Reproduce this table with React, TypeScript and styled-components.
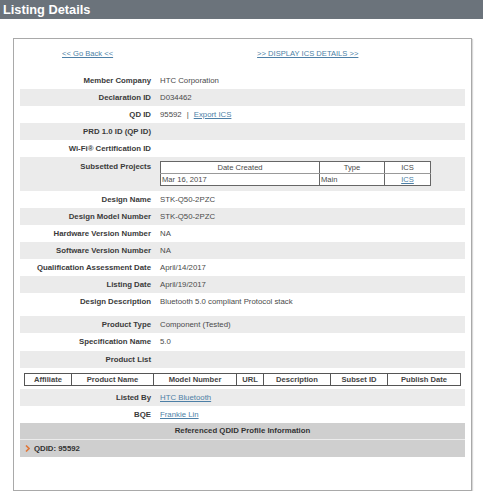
import React from "react";
import styled, { createGlobalStyle } from "styled-components";

const Global = createGlobalStyle`
  html, body { margin: 0; padding: 0; background: #fff; }
  body { font-family: "Liberation Sans", Arial, sans-serif; }
`;

const Header = styled.div`
  height: 19px;
  background: #6b737b;
  color: #fff;
  font-weight: bold;
  font-size: 12.8px;
  line-height: 20px;
  padding-left: 3px;
`;

const Panel = styled.div`
  margin: 19px 0 0 13px;
  height: 451px;
  border: 1px solid #a9a9a9;
  box-shadow: 1px 1px 1px #d8d8d8;
  padding: 0 6px;
  box-sizing: content-box;
  width: 445px;
`;

const LinkRow = styled.div`
  display: flex;
  padding: 10px 0 0 42px;
  height: 23px;
  font-size: 7.6px;
  line-height: 9px;
`;

const Link = styled.a<{ $gap?: number }>`
  color: #4d7fa6;
  text-decoration: underline;
  margin-left: ${(p) => p.$gap ?? 0}px;
  cursor: pointer;
`;

const Rows = styled.div`
  display: flex;
  flex-direction: column;
`;

const Row = styled.div<{ $alt?: boolean; $h?: number; $top?: boolean }>`
  display: grid;
  grid-template-columns: 135px 1fr;
  min-height: ${(p) => p.$h ?? 17}px;
  background: ${(p) => (p.$alt ? "#ebebeb" : "#fff")};
  align-items: ${(p) => (p.$top ? "start" : "center")};
  font-size: 7.8px;
  line-height: 10px;
`;

const Label = styled.div<{ $pt?: number }>`
  text-align: right;
  padding-right: 4px;
  font-weight: bold;
  color: #3a3a3a;
  padding-top: ${(p) => p.$pt ?? 0}px;
`;

const Value = styled.div<{ $pt?: number }>`
  padding-left: 5px;
  color: #4a4a4a;
  padding-top: ${(p) => p.$pt ?? 0}px;
`;

const Sep = styled.span`
  margin: 0 5px;
`;

const SubTable = styled.table`
  border-collapse: collapse;
  width: 271px;
  margin: 4px 0 5px 0;
  font-size: 7.6px;
  background: #fff;
  td, th {
    border: 1px solid #666;
    height: 11px;
    padding: 0 1px;
    line-height: 10px;
    color: #4a4a4a;
    font-weight: normal;
  }
  th { border-bottom-color: #999; }
  td { border-top: none; }
`;

const Cell = styled.td<{ $center?: boolean }>`
  text-align: ${(p) => (p.$center ? "center" : "left")};
`;

const ProductWrap = styled.div`
  background: #fff;
  padding: 5px 4px 3px 4px;
`;

const ProductTable = styled.table`
  border-collapse: collapse;
  width: 437px;
  font-size: 7.6px;
  th {
    border: 1px solid #555;
    height: 11px;
    padding: 0;
    font-weight: bold;
    color: #444;
    text-align: center;
    line-height: 10px;
  }
`;

const RefHeader = styled.div`
  background: #cfcfcf;
  height: 16px;
  line-height: 16px;
  text-align: center;
  font-weight: bold;
  font-size: 7.8px;
  color: #333;
  border-bottom: 1px solid #ececec;
`;

const QdidRow = styled.div`
  background: #cfcfcf;
  height: 17px;
  display: flex;
  align-items: center;
  gap: 4px;
  padding-left: 5px;
  font-weight: bold;
  font-size: 7.8px;
  color: #333;
`;

export default function App() {
  return (
    <>
      <Global />
      <Header>Listing Details</Header>
      <Panel>
        <LinkRow>
          <Link>&lt;&lt; Go Back &lt;&lt;</Link>
          <Link $gap={144}>&gt;&gt; DISPLAY ICS DETAILS &gt;&gt;</Link>
        </LinkRow>
        <Rows>
          <Row>
            <Label>Member Company</Label>
            <Value>HTC Corporation</Value>
          </Row>
          <Row $alt>
            <Label>Declaration ID</Label>
            <Value>D034462</Value>
          </Row>
          <Row>
            <Label>QD ID</Label>
            <Value>
              95592<Sep>|</Sep>
              <Link>Export ICS</Link>
            </Value>
          </Row>
          <Row $alt>
            <Label>PRD 1.0 ID (QP ID)</Label>
            <Value />
          </Row>
          <Row>
            <Label>Wi-Fi® Certification ID</Label>
            <Value />
          </Row>
          <Row $alt $top $h={33}>
            <Label $pt={5}>Subsetted Projects</Label>
            <Value>
              <SubTable>
                <thead>
                  <tr>
                    <th style={{ width: 156 }}>Date Created</th>
                    <th style={{ width: 62 }}>Type</th>
                    <th>ICS</th>
                  </tr>
                </thead>
                <tbody>
                  <tr>
                    <Cell>Mar 16, 2017</Cell>
                    <Cell>Main</Cell>
                    <Cell $center>
                      <Link>ICS</Link>
                    </Cell>
                  </tr>
                </tbody>
              </SubTable>
            </Value>
          </Row>
          <Row>
            <Label>Design Name</Label>
            <Value>STK-Q50-2PZC</Value>
          </Row>
          <Row $alt>
            <Label>Design Model Number</Label>
            <Value>STK-Q50-2PZC</Value>
          </Row>
          <Row>
            <Label>Hardware Version Number</Label>
            <Value>NA</Value>
          </Row>
          <Row $alt>
            <Label>Software Version Number</Label>
            <Value>NA</Value>
          </Row>
          <Row>
            <Label>Qualification Assessment Date</Label>
            <Value>April/14/2017</Value>
          </Row>
          <Row $alt>
            <Label>Listing Date</Label>
            <Value>April/19/2017</Value>
          </Row>
          <Row $top $h={23}>
            <Label $pt={4}>Design Description</Label>
            <Value $pt={4}>Bluetooth 5.0 compliant Protocol stack</Value>
          </Row>
          <Row $alt>
            <Label>Product Type</Label>
            <Value>Component (Tested)</Value>
          </Row>
          <Row $h={18}>
            <Label>Specification Name</Label>
            <Value>5.0</Value>
          </Row>
          <Row $alt>
            <Label>Product List</Label>
            <Value />
          </Row>
          <ProductWrap>
            <ProductTable>
              <thead>
                <tr>
                  <th style={{ width: 46 }}>Affiliate</th>
                  <th style={{ width: 81 }}>Product Name</th>
                  <th style={{ width: 82 }}>Model Number</th>
                  <th style={{ width: 26 }}>URL</th>
                  <th style={{ width: 66 }}>Description</th>
                  <th style={{ width: 56 }}>Subset ID</th>
                  <th>Publish Date</th>
                </tr>
              </thead>
            </ProductTable>
          </ProductWrap>
          <Row $alt>
            <Label>Listed By</Label>
            <Value>
              <Link>HTC Bluetooth</Link>
            </Value>
          </Row>
          <Row $h={17}>
            <Label>BQE</Label>
            <Value>
              <Link>Frankie Lin</Link>
            </Value>
          </Row>
          <RefHeader>Referenced QDID Profile Information</RefHeader>
          <QdidRow>
            <svg width="5" height="7" viewBox="0 0 5 7">
              <path d="M1 0.5 L4 3.5 L1 6.5" stroke="#e0783a" strokeWidth="1.6" fill="none" />
            </svg>
            QDID: 95592
          </QdidRow>
        </Rows>
      </Panel>
    </>
  );
}
